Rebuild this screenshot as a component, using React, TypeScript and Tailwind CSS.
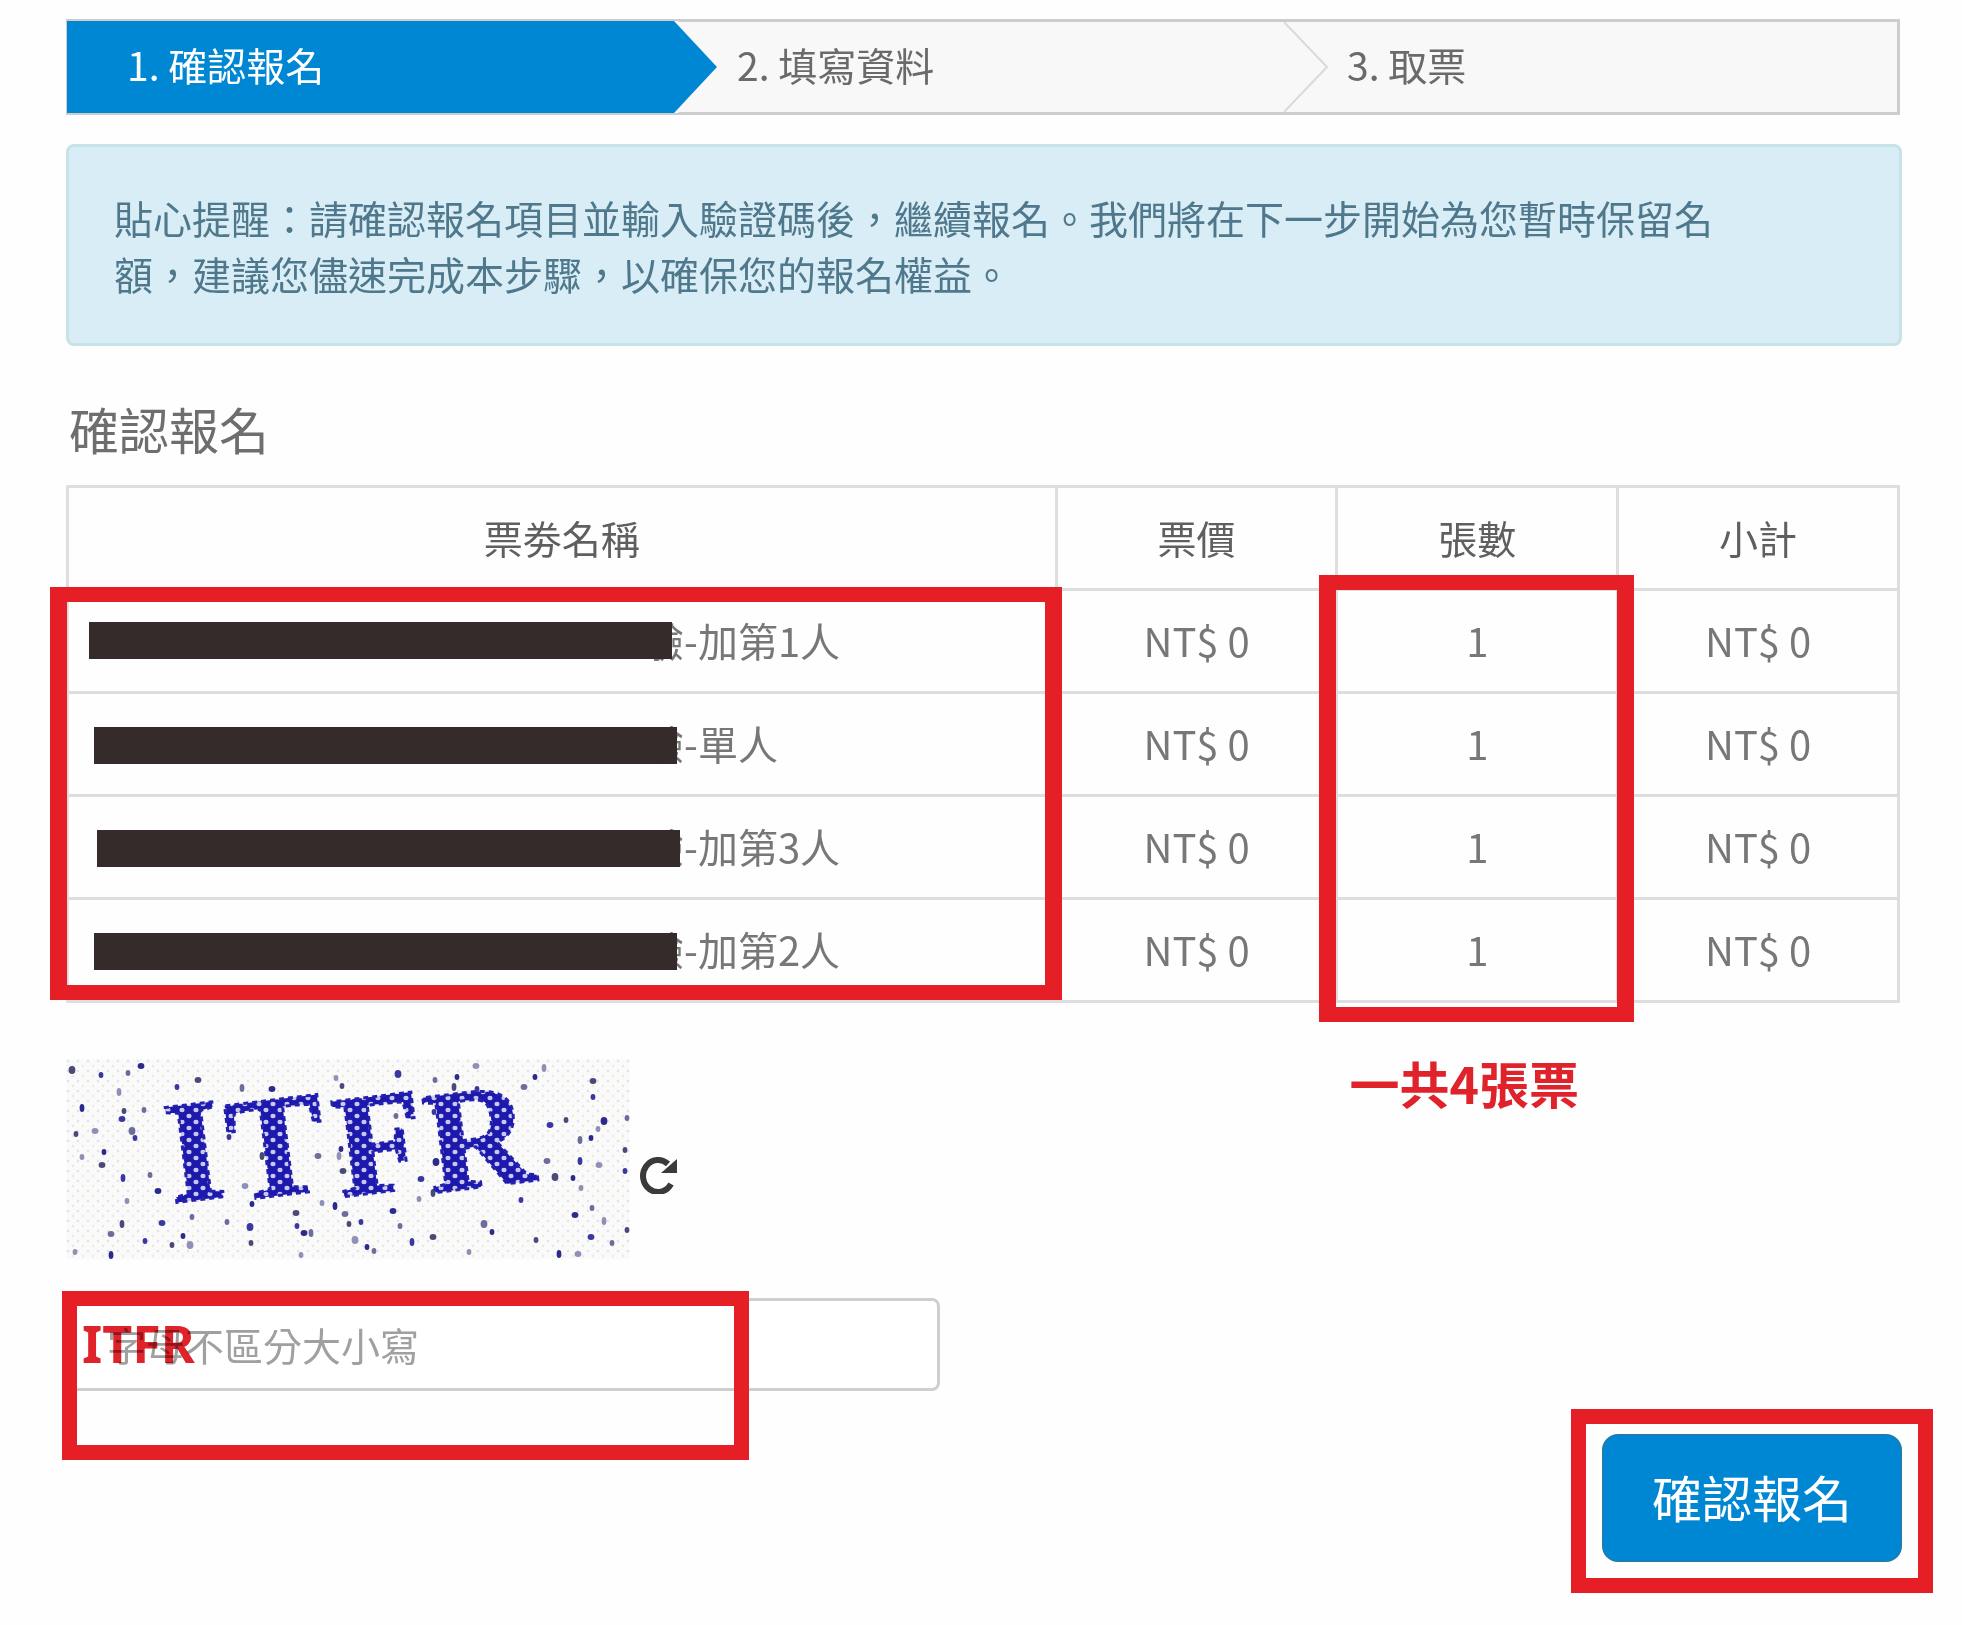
import { useState } from "react";

const steps = ["1. 確認報名", "2. 填寫資料", "3. 取票"];

const tickets = [
  { name: "驗-加第1人", price: "NT$ 0", count: 1, subtotal: "NT$ 0", mask: "left-[20px]" },
  { name: "驗-單人", price: "NT$ 0", count: 1, subtotal: "NT$ 0", mask: "left-[25px]" },
  { name: "驗-加第3人", price: "NT$ 0", count: 1, subtotal: "NT$ 0", mask: "left-[28px]" },
  { name: "驗-加第2人", price: "NT$ 0", count: 1, subtotal: "NT$ 0", mask: "left-[25px]" },
];

// x, y of the noise specks
const specks = [
  [6, 11], [35, 16], [62, 14], [75, 7], [53, 33], [58, 52], [56, 60], [78, 51], [16, 49], [29, 72],
  [10, 75], [69, 79], [66, 72], [38, 93], [16, 98], [36, 106], [57, 119], [84, 116], [92, 132], [61, 142],
  [56, 165], [96, 164], [126, 158], [117, 177], [124, 186], [106, 186], [79, 182], [45, 175], [45, 196], [9, 193],
  [132, 21], [111, 28], [176, 29], [206, 30], [270, 19], [276, 27], [332, 15], [369, 21], [391, 18], [410, 7],
  [388, 28], [411, 30], [458, 28], [469, 18], [478, 9], [527, 22], [527, 38], [561, 59], [538, 62], [532, 70],
  [500, 61], [484, 66], [514, 81], [525, 79], [533, 106], [559, 91], [514, 102], [481, 102], [507, 119], [515, 129],
  [489, 118], [559, 112], [526, 149], [509, 156], [538, 162], [561, 171], [525, 178], [546, 184], [493, 195], [512, 195],
  [470, 181], [455, 141], [418, 165], [426, 173], [403, 193], [367, 178], [346, 183], [334, 167], [327, 152], [353, 140],
  [367, 134], [355, 120], [308, 192], [301, 188], [289, 181], [283, 165], [295, 163], [279, 155], [269, 147], [256, 144],
  [230, 154], [231, 167], [245, 174], [238, 174], [235, 196], [185, 184], [184, 168], [161, 163], [186, 145], [179, 127],
  [196, 97], [163, 78], [252, 97], [275, 90], [273, 97], [277, 112], [368, 53], [330, 57], [370, 103],
];

const speckColors = ["#4a4a78", "#3a38a0", "#6d6d9c", "#2c2a8c", "#8f8fb8"];

function Captcha() {
  return (
    <svg viewBox="0 0 564 200" className="h-[200px] w-[564px] shrink-0" role="img" aria-label="驗證碼">
      <defs>
        <pattern id="grain" width="10" height="10" patternUnits="userSpaceOnUse">
          <rect width="10" height="10" fill="#fafafa" />
          <circle cx="2" cy="2" r="1.2" fill="#e2e2ea" />
          <circle cx="7" cy="7" r="1.2" fill="#ebebd8" />
        </pattern>
        <pattern id="ink" width="14" height="12" patternUnits="userSpaceOnUse">
          <rect width="14" height="12" fill="#1c19ac" />
          <ellipse cx="4" cy="3" rx="2.6" ry="2.2" fill="#c9c8f2" />
          <ellipse cx="11" cy="9" rx="2.6" ry="2.2" fill="#c9c8f2" />
        </pattern>
      </defs>
      <rect width="564" height="200" fill="url(#grain)" />
      {specks.map(([x, y], i) => (
        <ellipse
          key={i}
          cx={x}
          cy={y}
          rx={i % 3 === 0 ? 3.4 : 2.4}
          ry={i % 4 === 0 ? 4 : 3}
          fill={speckColors[i % speckColors.length]}
        />
      ))}
      <text
        x="106 168 275 366"
        y="144 142 138 134"
        rotate="-7"
        fontSize="146"
        fontWeight="bold"
        fill="url(#ink)"
        stroke="#2421b0"
        strokeWidth="3"
        strokeDasharray="5 4"
        className="font-['Liberation_Serif',serif]"
      >
        ITFR
      </text>
    </svg>
  );
}

function StepBar() {
  return (
    <ol className="mr-[2px] flex h-[96px] border-[3px] border-[#cdcdcd] bg-[#f8f8f8] text-[39px] text-[#6a6a6a]">
      {steps.map((step, i) => (
        <li
          key={step}
          className={`relative flex flex-1 items-center pb-[5px] pl-[60px] ${i === 0 ? "bg-[#0087d3] text-white -my-px -ml-[2px]" : ""}`}
        >
          {step}
          {i < 2 && (
            <svg
              viewBox="0 0 44 92"
              preserveAspectRatio="none"
              className="absolute left-full top-0 z-10 -ml-[3px] h-full w-[44px]"
              aria-hidden="true"
            >
              {i === 0 && <path d="M0 0 H4 L44 46 L4 92 H0 Z" fill="#f8f8f8" />}
              <path
                d="M0 0 L43 46 L0 92"
                fill={i === 0 ? "#0087d3" : "#f8f8f8"}
                stroke={i === 0 ? "none" : "#dadada"}
                strokeWidth="2"
              />
            </svg>
          )}
        </li>
      ))}
    </ol>
  );
}

export default function App() {
  const [code, setCode] = useState("");

  return (
    <main className="min-h-screen bg-[#fefefe] pt-[19px] pr-[60px] pb-8 pl-[66px] font-['Noto_Sans_CJK_TC',sans-serif] text-[#777]">
      <StepBar />

      <div className="mt-[29px] rounded-lg border-[3px] border-[#c8e3e8] bg-[#d9edf6] pt-[42px] pr-44 pb-[42px] pl-[45px] text-[39px] leading-[56px] text-[#4f788c]">
        貼心提醒：請確認報名項目並輸入驗證碼後，繼續報名。我們將在下一步開始為您暫時保留名額，建議您儘速完成本步驟，以確保您的報名權益。
      </div>

      <h1 className="mt-[52px] pl-[3px] text-[50px] leading-[60px] text-[#6e6e6e]">確認報名</h1>

      <div className="relative mt-[27px] mr-[2px]">
        <table className="w-full table-fixed border-collapse text-[40px] leading-[56px]">
          <colgroup>
            <col className="w-[54%]" />
            <col />
            <col />
            <col />
          </colgroup>
          <thead>
            <tr className="h-[103px] text-[39px] text-[#5f5f5f]">
              {["票劵名稱", "票價", "張數", "小計"].map((h) => (
                <th key={h} scope="col" className="border-[3px] border-[#dedede] pb-[3px] font-normal">
                  {h}
                </th>
              ))}
            </tr>
          </thead>
          <tbody>
            {tickets.map((t, i) => (
              <tr key={t.name} className="h-[103px] text-center">
                <td className="relative border-[3px] border-[#dedede] pb-[3px] pl-[575px] text-left">
                  {t.name}
                  <span
                    className={`absolute h-[37px] w-[583px] bg-[#352b2a] ${i === 0 ? "top-[31px]" : "top-[33px]"} ${t.mask}`}
                  />
                </td>
                <td className="border-[3px] border-[#dedede] pb-[3px]">{t.price}</td>
                <td className="border-[3px] border-[#dedede] pb-[3px]">{t.count}</td>
                <td className="border-[3px] border-[#dedede] pb-[3px]">{t.subtotal}</td>
              </tr>
            ))}
          </tbody>
        </table>

        <div className="absolute top-[102px] bottom-[3px] -left-4 w-[55.2%] border-x-[17px] border-y-[15px] border-[#e61e26]" />
        <div className="absolute top-[90px] right-[14.5%] -bottom-[19px] w-[17.2%] border-x-[17px] border-y-[15px] border-[#e61e26]" />
        <p className="absolute top-full right-[17.5%] mt-[49px] text-[50px] leading-[60px] font-bold text-[#e0222b]">
          一共4張票
        </p>
      </div>

      <form onSubmit={(e) => e.preventDefault()}>
        <div className="mt-14 flex items-center gap-2">
          <Captcha />
          <button type="button" aria-label="重新產生驗證碼" className="mt-[32px] text-[#3a3a3a]">
            <svg viewBox="0 0 40 38" className="h-[38px] w-[40px]" aria-hidden="true">
              <path d="M33 28 A15 16 0 1 1 30 8" fill="none" stroke="currentColor" strokeWidth="6" />
              <path d="M39 3 V17 H23 Z" fill="currentColor" />
            </svg>
          </button>
        </div>

        <div className="relative mt-[39px] w-[874px] max-w-full">
          <input
            type="text"
            aria-label="驗證碼"
            placeholder="字母不區分大小寫"
            value={code}
            onChange={(e) => setCode(e.target.value)}
            className="h-[93px] w-full rounded-lg border-[3px] border-[#cfcfcf] bg-white pb-[2px] pl-[38px] text-[39px] placeholder:text-[#a0a0a0]"
          />
          <div className="pointer-events-none absolute -top-[7px] -left-[4px] h-[169px] w-[687px] border-[15px] border-[#e61e26]" />
          <span className="pointer-events-none absolute top-[15px] left-[16px] font-['Noto_Sans',sans-serif] text-[52px] leading-[60px] font-bold text-[#e0222b] mix-blend-multiply">
            ITFR
          </span>
        </div>

        <div className="mt-[43px] flex justify-end">
          <div className="relative">
            <button
              type="submit"
              className="h-[128px] rounded-[16px] border-2 border-[#1c7cb5] bg-[#0087d3] px-[48px] pb-[3px] text-[50px] text-white"
            >
              確認報名
            </button>
            <div className="pointer-events-none absolute -inset-x-[31px] -top-[25px] -bottom-[31px] border-[15px] border-[#e61e26]" />
          </div>
        </div>
      </form>
    </main>
  );
}
